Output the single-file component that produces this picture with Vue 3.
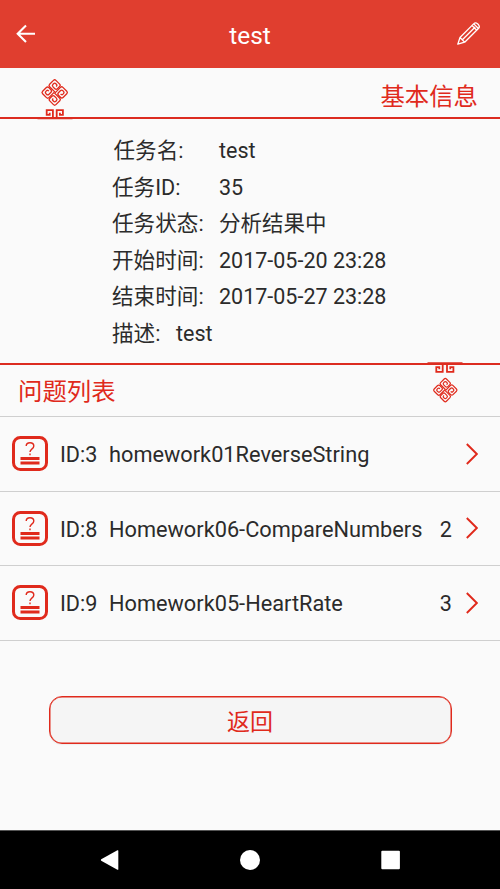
<script setup>
const details = [
  { label: '任务名:', value: 'test', kind: 'name' },
  { label: '任务ID:', value: '35', kind: '' },
  { label: '任务状态:', value: '分析结果中', kind: '' },
  { label: '开始时间:', value: '2017-05-20 23:28', kind: '' },
  { label: '结束时间:', value: '2017-05-27 23:28', kind: '' },
  { label: '描述:', value: 'test', kind: 'desc' },
]
const problems = [
  { id: 3, name: 'homework01ReverseString', count: '' },
  { id: 8, name: 'Homework06-CompareNumbers', count: '2' },
  { id: 9, name: 'Homework05-HeartRate', count: '3' },
]
const quarters = [0, 90, 180, 270]
</script>

<template>
  <div class="screen">
    <header class="bar">
      <svg class="back" viewBox="0 0 20 20"><path d="M10 1.5 1.7 9.7 10 17.9M2 9.7H19" /></svg>
      <h1>test</h1>
      <svg class="edit" viewBox="0 0 26 26">
        <path d="M1.8 23.2 4 16.5 17.6 2.9Q19.5 1 21.5 2.7L22.6 3.8Q24.2 5.7 22.4 7.5L8.7 21.2ZM4 16.5 8.7 21.2M6.4 18.8 19.2 6M16 4.5 20.8 9.2M17.8 2.9 22.4 7.5" />
      </svg>
    </header>

    <section class="heading info-heading">
      <svg class="ornament" viewBox="0 0 36 42">
        <g transform="translate(17.7 14.5) rotate(45)">
          <path v-for="a in quarters" :key="a" class="knot" :transform="`rotate(${a})`" d="M.5 0V-7.7Q.5-9.4 2.2-9.4H7.7Q9.4-9.4 9.4-7.7V-2.4Q9.4-.7 7.7-.7H4.6Q2.8-.7 2.8-2.5V-5.2Q2.8-7 4.6-7H5.4Q7-7 7-5.4V-4.4Q7-3 5.2-3.2" />
        </g>
        <path class="foot" d="M12.7 34.8V36.8H9.7V32.1H15.9V40M22.9 34.8V36.8H25.9V32.1H19.7V40" />
        <path class="base" d="M.5 40.7H35.5" />
      </svg>
      <h2>基本信息</h2>
    </section>

    <dl class="details">
      <div v-for="d in details" :key="d.label" class="detail" :class="d.kind">
        <dt>{{ d.label }}</dt>
        <dd>{{ d.value }}</dd>
      </div>
    </dl>

    <section class="heading list-heading">
      <h2>问题列表</h2>
      <svg class="ornament" viewBox="0 0 36 42">
        <g transform="translate(18.3 28.1) rotate(45)">
          <path v-for="a in quarters" :key="a" class="knot" :transform="`rotate(${a}) scale(.92)`" d="M.5 0V-7.7Q.5-9.4 2.2-9.4H7.7Q9.4-9.4 9.4-7.7V-2.4Q9.4-.7 7.7-.7H4.6Q2.8-.7 2.8-2.5V-5.2Q2.8-7 4.6-7H5.4Q7-7 7-5.4V-4.4Q7-3 5.2-3.2" />
        </g>
        <path class="foot" d="M12.3 7.2V5.2H9.3V9.9H15.7V1M23.3 7.2V5.2H26.4V9.9H20V1" />
        <path class="base" d="M.5 .8H35.5" />
      </svg>
    </section>

    <ul class="problems">
      <li v-for="p in problems" :key="p.id">
        <svg class="badge" viewBox="0 0 36 35">
          <rect x="1.5" y="1.5" width="33" height="32" rx="6.8" />
          <path class="mark" d="M14.2 10Q14.2 6.8 18 6.8T21.8 10Q21.8 11.7 19.8 13.1Q18 14.4 18 16M18 17.6V19.2" />
          <path class="lines" d="M8.5 22.5H27.5M8.5 27H27.5" />
        </svg>
        <span class="pid">ID:{{ p.id }}</span>
        <span class="pname">{{ p.name }}</span>
        <span class="count">{{ p.count }}</span>
        <svg class="chevron" viewBox="0 0 12 22"><path d="M.8 1 10.8 11 .8 21" /></svg>
      </li>
    </ul>

    <main class="action"><button>返回</button></main>

    <nav class="system">
      <svg viewBox="0 0 20 20"><path d="M18.3.8V19.2Q18.3 20 17.4 19.7L1.2 10.8Q.4 10 1.2 9.3L17.4.3Q18.3 0 18.3.8Z" /></svg>
      <svg viewBox="0 0 20 20"><circle cx="10" cy="10" r="10" /></svg>
      <svg viewBox="0 0 20 20"><rect x="1.3" y=".7" width="18.6" height="18.6" rx="1" /></svg>
    </nav>
  </div>
</template>

<style>
body {
  background: #fafafa;
}
</style>

<style scoped>
.screen {
  display: flex;
  flex-direction: column;
  width: 500px;
  height: 889px;
  overflow: hidden;
  background: #fafafa;
  color: #2b2b2b;
  font-family: Roboto, "Noto Sans CJK SC", sans-serif;
  font-size: 21.6px;
}
svg {
  display: block;
  flex: none;
  fill: none;
}
h1, h2, dl, dd, ul {
  margin: 0;
  padding: 0;
  font-weight: 400;
}
.bar {
  display: flex;
  justify-content: space-between;
  align-items: center;
  box-sizing: border-box;
  height: 68px;
  padding: 0 18px 0 16px;
  background: #e03e2f;
  color: #fff;
}
.bar h1 {
  font-size: 24.4px;
  line-height: 30px;
  padding: 3px 0 0 8px;
}
.back {
  width: 20px;
  height: 20px;
  stroke: #fff;
  stroke-width: 2.1;
}
.edit {
  width: 26px;
  height: 26px;
  stroke: #fff;
  stroke-width: 1.3;
  stroke-linejoin: round;
}
.heading {
  display: flex;
  justify-content: space-between;
  box-sizing: border-box;
  color: #e02a1c;
}
.heading h2 {
  font-size: 24.4px;
  line-height: 36px;
}
.info-heading {
  height: 51px;
  padding: 0 22px 0 37px;
  border-bottom: 2px solid #dc2c20;
}
.info-heading h2 {
  padding-top: 11px;
}
.info-heading .ornament {
  margin-top: 10px;
}
.ornament {
  width: 36px;
  height: 42px;
}
.knot {
  stroke: #e02a1c;
  stroke-width: 1.3;
}
.foot {
  stroke: #e02a1c;
  stroke-width: 1.8;
}
.base {
  stroke: #dc2c20;
  stroke-width: 1.3;
}
.details {
  height: 230px;
  padding: 14px 0 0 112px;
}
.detail {
  display: flex;
  height: 36.6px;
  line-height: 36.6px;
  white-space: nowrap;
}
.detail dt {
  width: 107px;
}
.detail dd {
  font-size: 21.5px;
}
.name dt {
  box-sizing: border-box;
  padding-left: 1.5px;
}
.desc dt {
  width: 64px;
}
.list-heading {
  height: 54px;
  padding: 0 37px 0 18px;
  border-top: 2px solid #dc2c20;
  border-bottom: 1px solid #cfcfcf;
}
.list-heading h2 {
  padding-top: 9px;
}
.list-heading .ornament {
  margin-top: -3px;
}
.problems {
  list-style: none;
}
.problems li {
  display: flex;
  align-items: center;
  box-sizing: border-box;
  height: 74.6px;
  padding: 0 22px 0 12px;
  border-bottom: 1px solid #cfcfcf;
}
.problems span {
  padding-top: 2px;
}
.badge {
  width: 36px;
  height: 35px;
  stroke: #e02a1c;
  stroke-width: 3;
}
.mark {
  stroke-width: 1.4;
}
.lines {
  stroke-width: 2.8;
}
.pid {
  width: 49px;
  margin-left: 12px;
}
.pname {
  flex: 1;
  font-size: 21.75px;
}
.count {
  margin-right: 14px;
}
.chevron {
  width: 12px;
  height: 22px;
  stroke: #e02a1c;
  stroke-width: 1.9;
}
.action {
  flex: 1;
  padding: 55px 48.5px 0;
}
button {
  display: block;
  width: 100%;
  height: 48px;
  padding: 0;
  border: 1.5px solid #e02a1c;
  border-radius: 13px;
  background: #f5f5f5;
  box-shadow: 0 1px 1px #0000000d, inset 0 0 0 .5px #e02a1c;
  color: #e02a1c;
  font-family: inherit;
  font-size: 23px;
}
.system {
  display: flex;
  justify-content: space-between;
  align-items: center;
  box-sizing: border-box;
  height: 59px;
  padding: 0 100px;
  border-top: 1px solid #555;
  background: #000;
}
.system svg {
  width: 20px;
  height: 20px;
  fill: #fff;
}
</style>
